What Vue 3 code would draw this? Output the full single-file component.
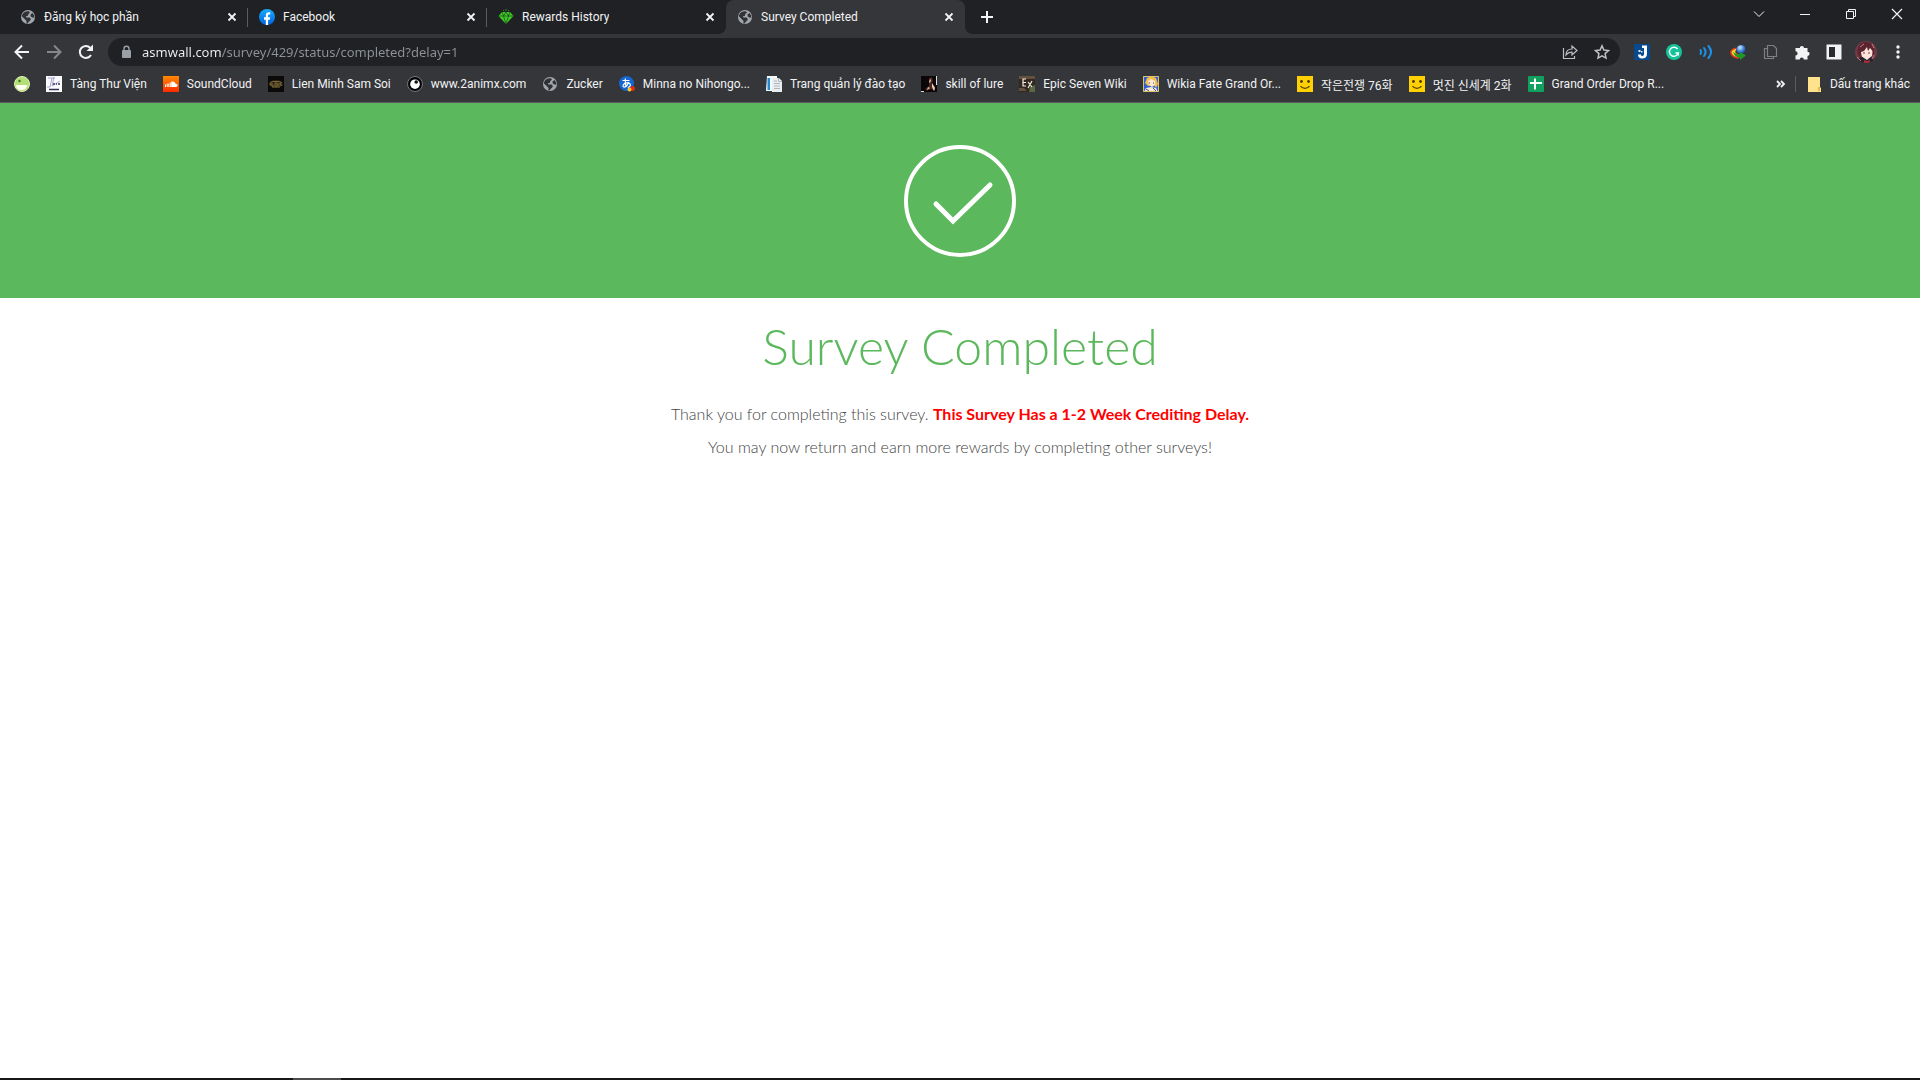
<template>
  <div class="browser">
    <svg class="sprite" aria-hidden="true">
      <defs>
        <linearGradient id="orange" x1="0" y1="0" x2="0" y2="1">
          <stop offset="0" stop-color="#ff8a00" />
          <stop offset="1" stop-color="#ff2a00" />
        </linearGradient>
        <linearGradient id="fb" x1="0" y1="0" x2="0" y2="1">
          <stop offset="0" stop-color="#18acfe" />
          <stop offset="1" stop-color="#0163e0" />
        </linearGradient>
        <radialGradient id="globeball" cx="0.4" cy="0.3" r="0.7">
          <stop offset="0" stop-color="#d5ecff" />
          <stop offset="0.5" stop-color="#4a90e0" />
          <stop offset="1" stop-color="#1b3f8c" />
        </radialGradient>
        <clipPath id="round"><circle cx="11" cy="11" r="11" /></clipPath>
      </defs>
      <symbol id="globe" viewBox="0 0 16 16">
        <circle cx="8" cy="8" r="7" fill="#a3a7ac" />
        <path d="M3 4.500c1.500-1.800 3.600-2.600 5.800-2.200L10 3.500 8.200 5.200 8 6.800 6 7.200 6.300 8.500h3.200l1.300 1.300-.3 1.500-2 1.700-.8 1.500-1.300-.3.1-2.300-1.600-1.600L2 7.500 1.800 6.500zM10.500 5.500l2-1.500 1.500 2.300.3 2.500-1.800-.3-1.800-1z" fill="#303236" />
      </symbol>
      <symbol id="facebook" viewBox="0 0 16 16">
        <circle cx="8" cy="8" r="8" fill="url(#fb)" />
        <path d="M6.800 16v-5.300H5V8.200h1.800V6.600c0-2.100 1.100-3.300 3-3.300.6 0 1.200.1 1.500.2v2.100h-1c-.9 0-1.200.4-1.200 1.200v1.400h2.100l-.4 2.500H9.100V16z" fill="#fff" />
      </symbol>
      <symbol id="gem" viewBox="0 0 16 16">
        <path d="M4 3h8l3.500 4L8 15 .5 7z" fill="#3ecb24" />
        <path d="M.5 7h15M4 3l1.500 4L8 15l2.500-8L12 3M5.500 7L8 3l2.500 4" fill="none" stroke="#20401d" stroke-width="0.700" />
        <path d="M5 2l1-1M8 2V0M11 2l-1-1" stroke="#2b8d1c" />
      </symbol>
      <symbol id="slime" viewBox="0 0 16 16">
        <circle cx="8" cy="8" r="7.500" fill="#b4de76" stroke="#dcf5b5" />
        <path d="M2 9h11c0 3-2 5-5.500 5S2 12 2 9z" fill="#fffef0" />
        <circle cx="5.500" cy="5" r="1.200" fill="#307028" />
      </symbol>
      <symbol id="library" viewBox="0 0 16 16">
        <path d="M0 0h16v16H0z" fill="#fbfaff" />
        <path d="M2 2h7M6 2L4 11H1M8 1L6 10l8-5" fill="none" stroke="#aaa5d2" />
        <path d="M7 8h2M10 8h1M12 8h2M3 13.500h10" stroke="#303050" stroke-width="1.500" />
      </symbol>
      <symbol id="soundcloud" viewBox="0 0 16 16">
        <path d="M0 0h16v16H0z" fill="url(#orange)" />
        <path d="M2.500 8.500v2.500M4.200 7.500V11M5.800 7.500V11M7.300 6.500V11" stroke="#fff" />
        <path d="M8.200 11V5.800c2-1 4 .1 4.300 1.900 2.800-.2 2.600 3.300.2 3.300z" fill="#fff" />
      </symbol>
      <symbol id="lol" viewBox="0 0 16 16">
        <path d="M0 0h16v16H0z" fill="#0b0a08" />
        <ellipse cx="8" cy="8" rx="7" ry="4" fill="#2d2615" />
        <path d="M2 6.500l3-1h6l3 1M1 8h2v2M4 7v3h2M7 7h2v3H7zM10 7v3M12 10V7l2 3M4 11h8" fill="none" stroke="#8e7740" stroke-width="0.800" />
      </symbol>
      <symbol id="eye" viewBox="0 0 16 16">
        <circle cx="8" cy="8" r="7.500" fill="#050505" stroke="#777" />
        <circle cx="8" cy="8.200" r="4.800" fill="#fff" />
        <circle cx="9.200" cy="6" r="1.800" fill="#111" />
      </symbol>
      <symbol id="hiragana" viewBox="0 0 16 16">
        <circle cx="7.500" cy="7.500" r="7.500" fill="#1467d2" />
        <path d="M3.500 4.500h7M6.300 2.500c-.2 4 .1 6.500 1 8.500M9.500 6c-.5 3-2.600 5.300-4.600 5-1.600-.3-1-3.500 2.600-4.100 4.400-.8 5.400 3.600 1.300 4.600" fill="none" stroke="#fff" stroke-width="1.200" />
        <circle cx="13.500" cy="12.500" r="2.500" fill="#e12b1a" />
        <circle cx="10.500" cy="13.500" r="2" fill="#ffc51b" />
      </symbol>
      <symbol id="docs" viewBox="0 0 16 16">
        <path d="M1 0h10v15H0z" fill="#f5fafc" />
        <path d="M1.500 2h2.500v12H1.500z" fill="#2487d2" />
        <path d="M6 2h7l3 3v11H6z" fill="#e9edf0" />
        <path d="M8 5h3M8 7.500h6M8 10h6M8 12.500h6M12.500 2v3.500H16" fill="none" stroke="#aeb7bf" />
      </symbol>
      <symbol id="lure" viewBox="0 0 16 16">
        <path d="M0 0h16v16H0z" fill="#0b0708" />
        <path d="M8 2l3-1 1 4-1 2 3 4v4l-4-2-4 2-2-2 4-3z" fill="#4a2620" />
        <path d="M9 3l1 1-1 3-1-1zM11 7l3 5-1 3-2-4zM7 11l2 1-3 2z" fill="#f0cdb3" />
        <path d="M15.500 0v9M0 15.500h3" stroke="#dcdcdc" />
      </symbol>
      <symbol id="epic" viewBox="0 0 16 16">
        <path d="M0 0h16v16H0z" fill="#33281f" />
        <path d="M0 0h16v3H0zM0 12h5l3 3H0z" fill="#64513d" />
        <path d="M11 11l5-2v7h-6z" fill="#5c6745" />
        <path d="M7 3H4v7h3M4 6.500h3M9 6l4 5M13 5l-4 7" fill="none" stroke="#f3eee6" stroke-width="1.200" />
      </symbol>
      <symbol id="fate" viewBox="0 0 16 16">
        <path d="M0 0h16v16H0z" fill="#2f5fd0" />
        <path d="M4 2l4-2 5 2 2 6-2 4-2-3-6 1-3-3z" fill="#f6bd4a" />
        <path d="M5 5l3-2 4 2v4l-3 2-3-2zM3 12l5-1 5 1 2 4H1z" fill="#fbe7d2" />
        <path d="M6 7h1M10 7h1M3 13l3 2M10 12l3 3" stroke="#2e4b9a" />
        <path d="M.5.500h15v15H.500z" fill="none" stroke="#dbc46b" />
      </symbol>
      <symbol id="smile" viewBox="0 0 16 16">
        <path d="M0 0h16v16H0z" fill="#ffd102" />
        <circle cx="4.500" cy="5.500" r="1.400" fill="#4c3b00" />
        <circle cx="11.500" cy="5.500" r="1.400" fill="#4c3b00" />
        <path d="M3.500 10c2 3.200 7 3.200 9 0" fill="none" stroke="#4c3b00" stroke-width="1.200" />
      </symbol>
      <symbol id="sheet" viewBox="0 0 16 16">
        <rect width="16" height="16" rx="1" fill="#11a05d" />
        <path d="M2 7h12M7 2.500v11" stroke="#fff" stroke-width="2" />
      </symbol>
      <symbol id="folder" viewBox="0 0 16 16">
        <path d="M2 1h12v10l1 1v4H2z" fill="#ffe28c" />
        <path d="M12 11h2v4h-2z" fill="#e5bb45" />
      </symbol>
      <symbol id="back" viewBox="0 0 16 16">
        <path d="M15 8H2M8 1.500L1.500 8 8 14.500" fill="none" stroke="currentColor" stroke-width="2" />
      </symbol>
      <symbol id="forward" viewBox="0 0 16 16">
        <path d="M1 8h13M8 1.500L14.500 8 8 14.500" fill="none" stroke="currentColor" stroke-width="2" />
      </symbol>
      <symbol id="reload" viewBox="0 0 16 16">
        <path d="M13 11a6 6 0 1 1-.8-7.200" fill="none" stroke="currentColor" stroke-width="2" />
        <path d="M15 .500v6.500H8.500z" fill="currentColor" />
      </symbol>
      <symbol id="lock" viewBox="0 0 16 16">
        <rect x="4" y="6" width="9" height="8" rx="1" fill="#9aa0a6" />
        <path d="M6 6.500V4.700a2.500 2.500 0 0 1 5 0v1.800" fill="none" stroke="#9aa0a6" stroke-width="1.400" />
      </symbol>
      <symbol id="share" viewBox="0 0 16 16">
        <path d="M1.500 4v10.500h11V12M4 11c0-4 2.500-6 6-6V2l5 4.500-5 4.500V8.200C7.500 8 5.500 9 4 11z" fill="none" stroke="currentColor" stroke-width="1.200" />
      </symbol>
      <symbol id="star" viewBox="0 0 16 16">
        <path d="M8 1.800l1.900 4.200 4.600.5-3.400 3.100.9 4.500L8 11.800l-4 2.300.9-4.500L1.500 6.500 6.100 6z" fill="none" stroke="currentColor" stroke-width="1.500" />
      </symbol>
      <symbol id="jd" viewBox="0 0 16 16">
        <path d="M0 0h16v16H0z" fill="#074a8f" />
        <path d="M8 1.500h5V10c0 3-2 4.500-5 4.500-2.500 0-4-1.500-4-4h3c0 1 .5 1.500 1.300 1.500 1 0 1.700-.7 1.700-2V4H8z" fill="#fff" />
        <path d="M4.500 6h2v2h-2zM7 7h1.500v1.500H7z" fill="#e4edf7" />
      </symbol>
      <symbol id="grammarly" viewBox="0 0 16 16">
        <circle cx="8" cy="8" r="8" fill="#15c39a" />
        <path d="M11.500 5A4.500 4.500 0 1 0 12.300 9H9.500M12.300 8.500v3" fill="none" stroke="#fff" stroke-width="1.400" />
      </symbol>
      <symbol id="waves" viewBox="0 0 16 16">
        <g fill="none" stroke="#1b93ec" stroke-width="2" stroke-linecap="round">
          <path d="M2.500 6q1.400 2 0 4" />
          <path d="M6 4q3.200 4 0 8" />
          <path d="M10.500 2q5 6 0 12" />
        </g>
      </symbol>
      <symbol id="idm" viewBox="0 0 16 16">
        <path d="M0 8c1-3 4-5 7-4L5 7c1 3 5 4 8 4l-5 4C4 14 0 12 0 8z" fill="#d83b1e" />
        <path d="M1.500 8c1-2 3-3 5-3L5 8c1 3 5 3 7 3l-3 2C5 13 2 11 1.500 8z" fill="#f5d72c" />
        <circle cx="11" cy="5.500" r="4.500" fill="url(#globeball)" />
        <path d="M3.500 7.500c1 2.500 3.500 3 6.500 2.500V8l6 3.500-6 4.500v-2.500c-4 0-6.500-2.500-6.500-6z" fill="#1b9a26" />
      </symbol>
      <symbol id="copy" viewBox="0 0 16 16">
        <path d="M5.500 1.500h6l3 3v8h-9zM5.500 4.500h-3v10h9v-2" fill="none" stroke="#7d7f83" stroke-width="1.200" />
      </symbol>
      <symbol id="puzzle" viewBox="0 0 16 16">
        <path d="M2 4h3.800a2.100 2.100 0 1 1 4.200 0h3.500v3.700a2.100 2.100 0 1 1 0 4.200V15.500H9.800a2 2 0 1 0-4 0H1.500v-4a2.100 2.100 0 1 0 0-4.200V4z" fill="#f1f3f4" />
      </symbol>
      <symbol id="panel" viewBox="0 0 16 16">
        <path d="M.5.500h15v15H.500z" fill="#f1f3f4" />
        <path d="M3 3h6v10H3z" fill="#292a2d" />
      </symbol>
      <symbol id="dots" viewBox="0 0 16 16">
        <g fill="#f1f3f4">
          <circle cx="8" cy="3" r="1.700" />
          <circle cx="8" cy="8" r="1.700" />
          <circle cx="8" cy="13" r="1.700" />
        </g>
      </symbol>
      <symbol id="avatar" viewBox="0 0 22 22">
        <g clip-path="url(#round)">
          <path d="M0 0h22v22H0z" fill="#6e3a44" />
          <path d="M2 22l3-6h12l3 6z" fill="#25222b" />
          <path d="M5 8l6-4 7 4v6l-6 5-6-4z" fill="#fbe4dc" />
          <path d="M3 14C1 5 6 1 11 1s10 4 8 13l-2 3 .5-7L15 7l-2 3-1-4-3 4-3 1 1 6z" fill="#5a2430" />
          <path d="M5 6l4-3M2 16l4 4M17 3l2 4M19 14l-2 4" stroke="#c47e84" />
          <path d="M8 12h2M13 12h2" stroke="#913344" />
          <path d="M9 19l3 1 3-1v3H9z" fill="#a62d3b" />
        </g>
      </symbol>
      <symbol id="cross" viewBox="0 0 16 16">
        <path d="M4.500 4.500l7 7M11.500 4.500l-7 7" stroke="currentColor" stroke-width="1.800" />
      </symbol>
      <symbol id="plus" viewBox="0 0 16 16">
        <path d="M8 2v12M2 8h12" stroke="currentColor" stroke-width="2" />
      </symbol>
      <symbol id="chevron" viewBox="0 0 16 16">
        <path d="M3 5.500l5 5 5-5" fill="none" stroke="currentColor" />
      </symbol>
      <symbol id="minimize" viewBox="0 0 16 16">
        <path d="M3 8.500h10" stroke="currentColor" />
      </symbol>
      <symbol id="restore" viewBox="0 0 16 16">
        <path d="M3.500 5.500h7v7h-7zM5.500 5V3.500h7v7H11" fill="none" stroke="currentColor" />
      </symbol>
      <symbol id="close" viewBox="0 0 16 16">
        <path d="M3 3l10 10M13 3L3 13" stroke="currentColor" stroke-width="1.200" />
      </symbol>
      <symbol id="more" viewBox="0 0 16 16">
        <path d="M4 5l3 3-3 3M8 5l3 3-3 3" fill="none" stroke="currentColor" stroke-width="1.800" />
      </symbol>
    </svg>

    <header class="chrome">
      <div class="tab-strip">
        <div
          v-for="(tab, index) in tabs"
          :key="tab.title"
          class="tab"
          :class="{ active: index === activeTab, divided: index + 1 < activeTab }"
        >
          <button type="button" class="tab-select" @click="activeTab = index">
            <svg class="icon"><use :href="'#' + tab.icon" /></svg>
            <span class="tab-title">{{ tab.title }}</span>
          </button>
          <button type="button" class="tab-close" :aria-label="'Close ' + tab.title">
            <svg class="icon"><use href="#cross" /></svg>
          </button>
        </div>
        <button type="button" class="new-tab" aria-label="New tab">
          <svg class="icon"><use href="#plus" /></svg>
        </button>
        <div class="window-controls">
          <button v-for="name in windowButtons" :key="name" type="button" :aria-label="name">
            <svg class="icon"><use :href="'#' + name" /></svg>
          </button>
        </div>
      </div>

      <div class="toolbar">
        <div class="tools">
          <button type="button" class="tool" aria-label="Back"><svg class="icon"><use href="#back" /></svg></button>
          <button type="button" class="tool muted" aria-label="Forward"><svg class="icon"><use href="#forward" /></svg></button>
          <button type="button" class="tool" aria-label="Reload"><svg class="icon"><use href="#reload" /></svg></button>
        </div>
        <form class="omnibox" @submit.prevent>
          <svg class="icon"><use href="#lock" /></svg>
          <input v-model="url" type="text" class="url" aria-label="Address" spellcheck="false">
          <button type="button" class="tool" aria-label="Share"><svg class="icon"><use href="#share" /></svg></button>
          <button type="button" class="tool" aria-label="Bookmark"><svg class="icon"><use href="#star" /></svg></button>
        </form>
        <div class="tools">
          <button v-for="name in extensions" :key="name" type="button" class="tool" :aria-label="name">
            <svg class="icon" :class="{ large: name === 'avatar' }"><use :href="'#' + name" /></svg>
          </button>
        </div>
      </div>

      <nav class="bookmarks">
        <a v-for="item in bookmarks" :key="item.label" href="#" class="bookmark">
          <svg class="icon"><use :href="'#' + item.icon" /></svg>
          <span v-if="item.label">{{ item.label }}</span>
        </a>
        <div class="other">
          <button type="button" class="more" aria-label="More bookmarks">
            <svg class="icon"><use href="#more" /></svg>
          </button>
          <a href="#" class="bookmark folder">
            <svg class="icon"><use href="#folder" /></svg>
            <span>Dấu trang khác</span>
          </a>
        </div>
      </nav>
    </header>

    <main class="page">
      <div class="banner">
        <svg class="check" viewBox="0 0 112 112">
          <circle cx="56" cy="56" r="54" fill="none" stroke="#fff" stroke-width="4" />
          <path d="M32 59l17 17 37-36" fill="none" stroke="#fff" stroke-width="5" stroke-linecap="round" />
        </svg>
      </div>
      <div class="message">
        <h1>Survey Completed</h1>
        <p>Thank you for completing this survey. <strong>This Survey Has a 1-2 Week Crediting Delay.</strong></p>
        <p>You may now return and earn more rewards by completing other surveys!</p>
      </div>
    </main>

    <footer class="taskbar">
      <div class="taskbar-item"></div>
    </footer>
  </div>
</template>

<script setup>
import { ref } from 'vue';

const activeTab = ref(3);
const url = ref('asmwall.com/survey/429/status/completed?delay=1');

const tabs = [
  { title: 'Đăng ký học phần', icon: 'globe' },
  { title: 'Facebook', icon: 'facebook' },
  { title: 'Rewards History', icon: 'gem' },
  { title: 'Survey Completed', icon: 'globe' }
];

const windowButtons = ['chevron', 'minimize', 'restore', 'close'];

const extensions = ['jd', 'grammarly', 'waves', 'idm', 'copy', 'puzzle', 'panel', 'avatar', 'dots'];

const bookmarks = [
  { label: '', icon: 'slime' },
  { label: 'Tàng Thư Viện', icon: 'library' },
  { label: 'SoundCloud', icon: 'soundcloud' },
  { label: 'Lien Minh Sam Soi', icon: 'lol' },
  { label: 'www.2animx.com', icon: 'eye' },
  { label: 'Zucker', icon: 'globe' },
  { label: 'Minna no Nihongo...', icon: 'hiragana' },
  { label: 'Trang quản lý đào tạo', icon: 'docs' },
  { label: 'skill of lure', icon: 'lure' },
  { label: 'Epic Seven Wiki', icon: 'epic' },
  { label: 'Wikia Fate Grand Or...', icon: 'fate' },
  { label: '작은전쟁 76화', icon: 'smile' },
  { label: '멋진 신세계 2화', icon: 'smile' },
  { label: 'Grand Order Drop R...', icon: 'sheet' }
];
</script>

<style>
body {
  margin: 0;
  background: #fff;
}
</style>

<style scoped>
.browser {
  display: flex;
  flex-direction: column;
  min-height: 100vh;
  font-family: Roboto, "Noto Sans CJK KR", sans-serif;
  font-size: 12px;
  color: #f1f3f4;
}

.sprite {
  position: absolute;
  width: 0;
  height: 0;
}

button {
  display: flex;
  align-items: center;
  justify-content: center;
  padding: 0;
  border: none;
  background: none;
  color: inherit;
  font: inherit;
  cursor: pointer;
}

.icon {
  display: block;
  flex: none;
  width: 16px;
  height: 16px;
}

.icon.large {
  width: 22px;
  height: 22px;
}

.chrome {
  background: #35363a;
  border-bottom: 1px solid #5d5a60;
}

.tab-strip {
  display: flex;
  height: 34px;
  padding-left: 9px;
  background: #202124;
}

.tab {
  position: relative;
  display: flex;
  align-items: center;
  flex: 0 1 239px;
  min-width: 0;
  box-sizing: border-box;
  padding: 0 8px 0 11px;
}

.tab.divided::after {
  content: "";
  position: absolute;
  right: 0;
  top: 8px;
  width: 1px;
  height: 19px;
  background: #5b5c60;
}

.tab.active {
  background: #35363a;
  border-radius: 8px 8px 0 0;
}

/* flared corners where the active tab meets the toolbar */
.tab.active::before,
.tab.active::after {
  content: "";
  position: absolute;
  bottom: 0;
  width: 8px;
  height: 8px;
}

.tab.active::before {
  right: 100%;
  background: radial-gradient(circle at 0 0, #202124 8px, #35363a 8px);
}

.tab.active::after {
  left: 100%;
  background: radial-gradient(circle at 100% 0, #202124 8px, #35363a 8px);
}

.tab-select {
  flex: 1;
  min-width: 0;
  height: 34px;
  gap: 8px;
  justify-content: flex-start;
}

.tab-title {
  overflow: hidden;
  white-space: nowrap;
}

.new-tab {
  width: 28px;
  margin-left: 8px;
}

.window-controls {
  display: flex;
  margin-left: auto;
}

.window-controls button {
  width: 46px;
  height: 28px;
}

.toolbar {
  display: flex;
  align-items: center;
  gap: 6px;
  height: 36px;
  padding: 0 6px;
}

.tools {
  display: flex;
}

.tool {
  width: 32px;
  height: 28px;
}

.tool.muted {
  color: #85878b;
}

.omnibox {
  display: flex;
  align-items: center;
  flex: 1;
  min-width: 0;
  height: 28px;
  box-sizing: border-box;
  padding: 0 2px 0 10px;
  border-radius: 14px;
  background: #202124;
  color: #bdc1c6;
}

/* host is bright, the rest of the address is dimmed */
.url {
  flex: 1;
  min-width: 0;
  height: 28px;
  margin-left: 8px;
  padding: 0;
  border: none;
  outline: none;
  background: linear-gradient(to right, #f1f3f4 79px, #8e9297 79px);
  background-clip: text;
  -webkit-background-clip: text;
  color: transparent;
  font-family: "Noto Sans", sans-serif;
  font-size: 13px;
}

.bookmarks {
  display: flex;
  align-items: center;
  gap: 16px;
  height: 28px;
  padding: 0 10px 4px 14px;
}

.bookmark {
  display: flex;
  align-items: center;
  gap: 8px;
  color: inherit;
  white-space: nowrap;
  text-decoration: none;
}

.other {
  display: flex;
  align-items: center;
  gap: 6px;
  margin-left: auto;
}

.folder {
  padding-left: 10px;
  border-left: 1px solid #5b5c60;
}

.page {
  flex: 1;
  font-family: Lato, sans-serif;
  text-align: center;
}

.banner {
  display: flex;
  justify-content: center;
  padding: 42px 0 41px;
  background: #5cb85c;
}

.check {
  display: block;
  width: 112px;
  height: 112px;
}

.message {
  padding-top: 18px;
  color: #444;
  font-size: 16px;
  font-weight: 300;
  line-height: 23px;
}

h1 {
  margin: 0 0 26px;
  color: #5cb85c;
  font-size: 50px;
  font-weight: 300;
  line-height: 60px;
}

p {
  margin: 0 0 10px;
}

strong {
  color: #f00;
  font-weight: 700;
}

.taskbar {
  height: 2px;
  padding-left: 293px;
  background: #191617;
}

.taskbar-item {
  width: 48px;
  height: 2px;
  background: #4c4b4c;
}
</style>
